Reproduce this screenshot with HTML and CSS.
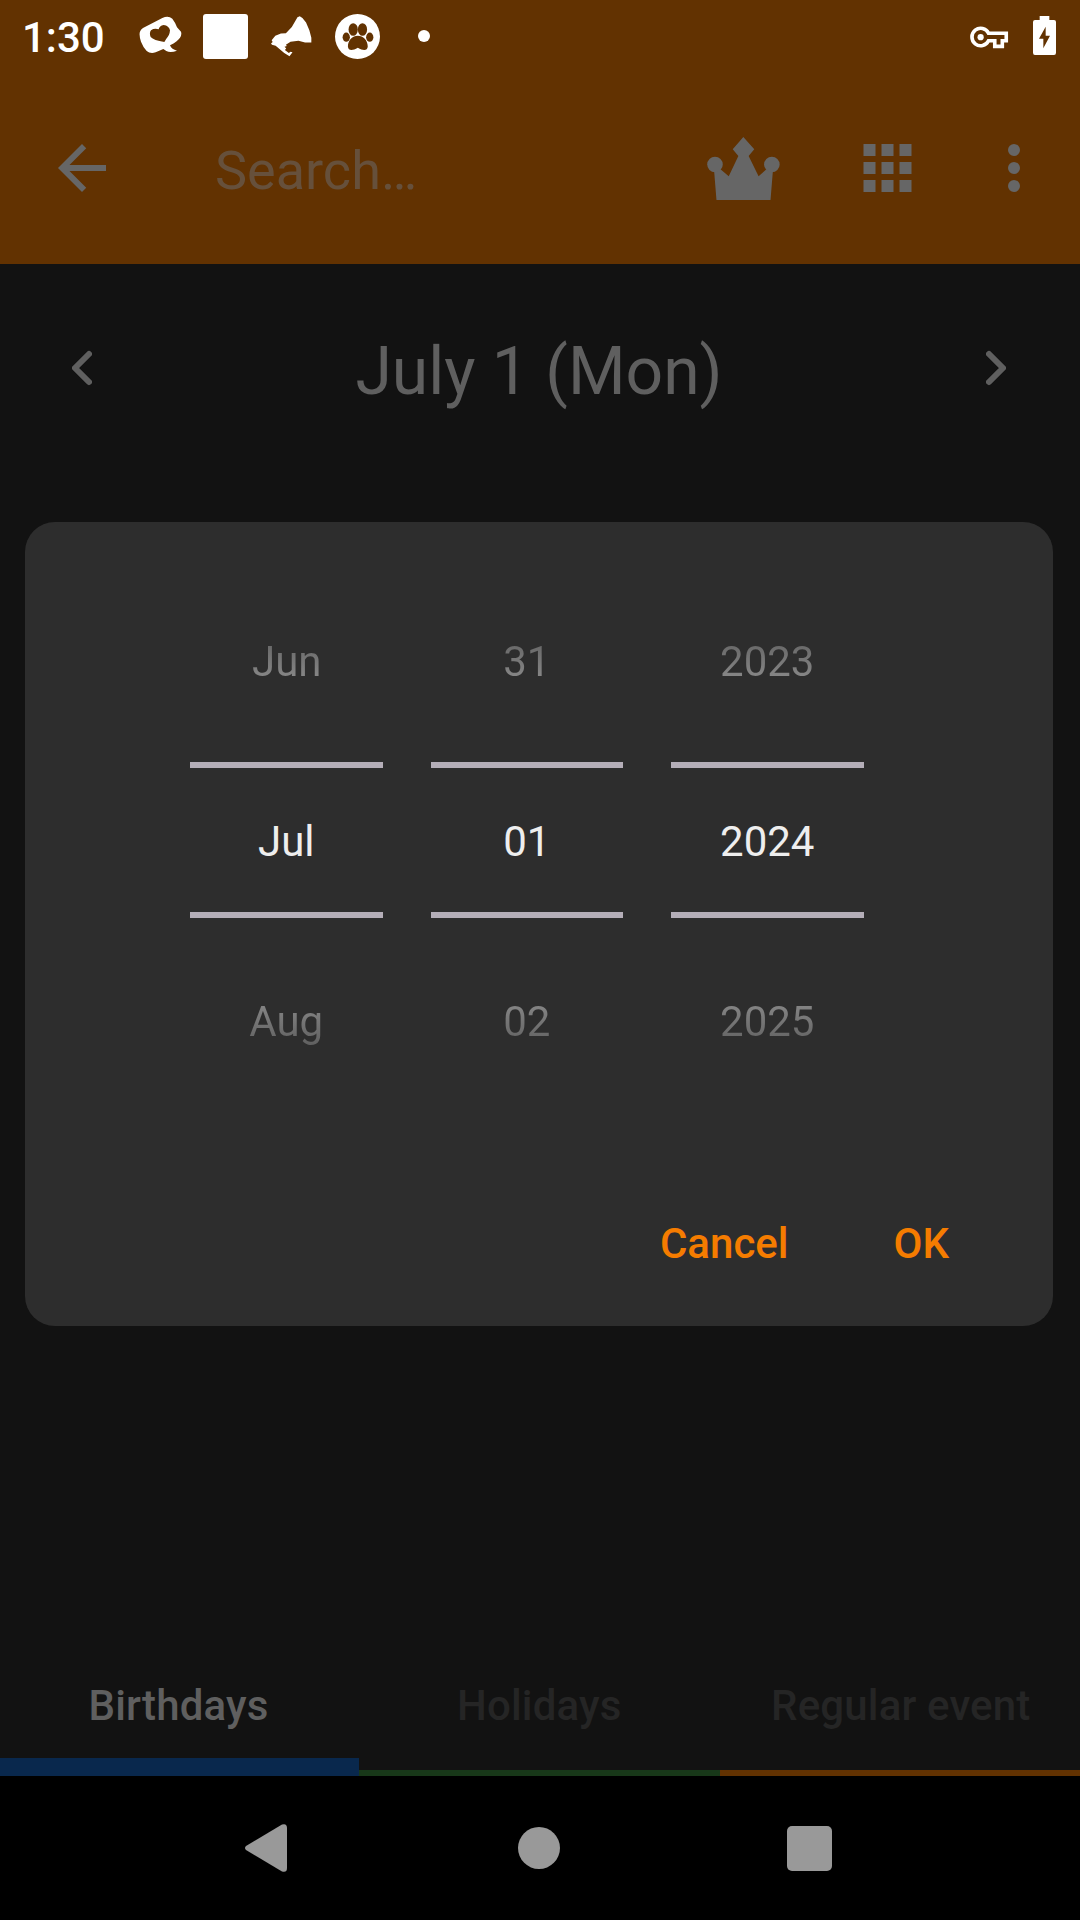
FILE: index.html
```html
<!DOCTYPE html>
<html lang="en">
<head>
<meta charset="utf-8">
<title>Calendar</title>
<link rel="stylesheet" href="styles.css">
</head>
<body>
<div class="screen">
  <header class="header">
    <div class="status">
      <span class="clock">1:30</span>
      <div class="notifications">
        <svg class="n-chat" viewBox="414 48 132 114"><path fill="#fff" fill-rule="evenodd" d="M416 106Q414 92 426 84L484 54Q502 46 514 56Q522 66 528 82L540 95Q543 104 537 113Q530 124 507 136Q512 149 528 152Q508 160 496 153L487 147L464 157Q448 162 437 153Q427 143 420 125Q416 115 416 106ZM490 126Q458 121 449 111Q444 99 450 91Q460 84 473 88Q475 77 488 75Q504 77 507 91Q506 106 496 116Z"/></svg>
        <span class="n-square"></span>
        <svg class="n-horn" viewBox="94 46 124 124"><path fill="#fff" d="M174 50L181 47L189 52L200 66L210 89L216 112L216 126L197 126L177 121L153 124L139 133L142 137L135 139L140 144L136 149L148 158L153 154L159 156L150 168L134 158L108 136L97 133L94 129L99 125L96 119L107 106L124 99L139 98L157 79Z"/></svg>
        <svg class="n-paw" viewBox="284 39 136 136"><circle cx="352" cy="107" r="68" fill="#fff"/><g fill="#623201"><ellipse cx="339" cy="86" rx="14" ry="19"/><ellipse cx="367" cy="86" rx="14" ry="19"/><ellipse cx="318" cy="109" rx="11" ry="14"/><ellipse cx="389" cy="109" rx="11" ry="14"/><path d="M353 105C369 105 383 119 383 137C382 150 370 151 353 141C336 151 324 150 323 137C323 119 337 105 353 105Z"/></g></svg>
        <span class="n-more"></span>
      </div>
      <div class="system">
        <svg class="s-key" viewBox="90 76 118 70"><path fill="none" stroke="#fff" stroke-width="11" d="M146 98H200V121H188V138H165V121H146A26.500 26.500 0 1 1 146 98Z"/><circle cx="122" cy="110" r="9.500" fill="#fff"/></svg>
        <svg class="s-battery" viewBox="279 48 69 117"><path fill="#fff" fill-rule="evenodd" d="M299 48H328V60H342Q348 60 348 66V158Q348 165 342 165H285Q279 165 279 158V66Q279 60 285 60H299ZM317 80L297 116H310V145L330 107H317Z"/></svg>
      </div>
    </div>
    <div class="toolbar">
      <svg class="back" viewBox="0 0 24 24"><path fill="#666" d="M20 11H7.830l5.590-5.590L12 4l-8 8 8 8 1.410-1.410L7.830 13H20v-2z"/></svg>
      <span class="search">Search…</span>
      <svg class="crown" viewBox="81 80 219 190"><g fill="#666"><path d="M190 80L223 117L206 137L236 198L258 179L279 184L272 270H109L102 184L122 178L146 198L175 137L158 117Z"/><circle cx="104.500" cy="163" r="23.500"/><circle cx="276" cy="163" r="23.500"/></g></svg>
      <svg class="apps" viewBox="0 0 48 48"><path fill="#666" d="M0 0h12v12H0zM18 0h12v12H18zM36 0h12v12H36zM0 18h12v12H0zM18 18h12v12H18zM36 18h12v12H36zM0 36h12v12H0zM18 36h12v12H18zM36 36h12v12H36z"/></svg>
      <svg class="more" viewBox="0 0 12 48"><g fill="#666"><circle cx="6" cy="6" r="6"/><circle cx="6" cy="24" r="6"/><circle cx="6" cy="42" r="6"/></g></svg>
    </div>
  </header>

  <main class="content">
    <div class="day">
      <svg class="chevron" viewBox="0 0 20 36"><path d="M17 4L3 18L17 32"/></svg>
      <h1 class="date">July 1 (Mon)</h1>
      <svg class="chevron" viewBox="0 0 20 36"><path d="M3 4L17 18L3 32"/></svg>
    </div>
  </main>

  <nav class="tabs">
    <div class="tab tab-birthdays">Birthdays</div>
    <div class="tab tab-holidays">Holidays</div>
    <div class="tab tab-regular">Regular event</div>
  </nav>

  <footer class="navbar">
    <svg class="nav-back" viewBox="0 0 42 48"><path fill="#999" d="M1 22L37 .5Q42 -1 42 4V44Q42 49 37 47.500L1 26Q-1 24 1 22Z"/></svg>
    <span class="nav-home"></span>
    <span class="nav-recent"></span>
  </footer>

  <section class="dialog">
    <div class="pickers">
      <div class="picker"><span class="before">Jun</span><span class="current">Jul</span><span class="after">Aug</span></div>
      <div class="picker"><span class="before">31</span><span class="current">01</span><span class="after">02</span></div>
      <div class="picker"><span class="before">2023</span><span class="current">2024</span><span class="after">2025</span></div>
    </div>
    <div class="actions"><span>Cancel</span><span>OK</span></div>
  </section>
</div>
</body>
</html>
```
FILE: styles.css
```css
* { box-sizing: border-box; }

body {
  margin: 0;
  background: #121212;
  font-family: Roboto, sans-serif;
}

svg { display: block; flex: none; }

.screen {
  position: relative;
  display: flex;
  flex-direction: column;
  width: 1080px;
  height: 1920px;
  overflow: hidden;
  background: #121212;
}

.header {
  height: 264px;
  background: #623201;
}

/* Status bar */
.status {
  display: flex;
  align-items: center;
  height: 72px;
  padding: 0 24px 0 22px;
}

.clock {
  width: 117px;
  padding-top: 3px;
  font-size: 42px;
  font-weight: 500;
  line-height: 50px;
  color: #fff;
}

.notifications { display: flex; align-items: center; }
.n-chat { width: 44px; height: 38px; margin-top: -2px; }
.n-square { width: 45px; height: 45px; margin-left: 20px; border-radius: 3px; background: #fff; }
.n-horn { width: 41px; height: 41px; margin-left: 23px; }
.n-paw { width: 45px; height: 45px; margin-left: 23px; }
.n-more { width: 12px; height: 12px; margin-left: 38px; border-radius: 50%; background: #fff; }

.system { display: flex; align-items: center; gap: 24px; margin-left: auto; }
.s-key { width: 39px; height: 23px; margin-top: 2px; }
.s-battery { width: 23px; height: 39px; margin-top: -1px; }

/* Toolbar */
.toolbar {
  display: flex;
  align-items: center;
  height: 192px;
  padding: 0 60px 0 46px;
}

.back { width: 72px; height: 72px; }

.search {
  flex: 1;
  margin: 5px 0 0 97px;
  font-size: 54px;
  line-height: 64px;
  color: #66503b;
}

.crown { width: 73px; height: 63px; margin-right: 83px; }
.apps { width: 49px; height: 48px; margin-right: 96px; }
.more { width: 12px; height: 48px; }

/* Selected day */
.content { flex: 1; }

.day {
  display: flex;
  align-items: center;
  justify-content: space-between;
  height: 208px;
  padding: 0 74px 0 72px;
}

.chevron {
  width: 20px;
  height: 36px;
  fill: none;
  stroke: #5f5f5f;
  stroke-width: 6;
  stroke-linecap: round;
  stroke-linejoin: round;
}

.date {
  margin: 8px 0 0;
  font-size: 66px;
  font-weight: 400;
  line-height: 80px;
  color: #5f5f5f;
}

/* Event tabs */
.tabs {
  display: grid;
  grid-template-columns: 359px 360.500px 360.500px;
  height: 140px;
}

.tab {
  padding-top: 45px;
  border-bottom: 6px solid;
  font-size: 42px;
  font-weight: 500;
  line-height: 50px;
  letter-spacing: 0.150px;
  text-align: center;
  color: #252525;
}

.tab-birthdays {
  padding-right: 2px;
  border-bottom: 18px solid #09284d;
  color: #5f5f5f;
}

.tab-holidays { border-bottom-color: #183819; }
.tab-regular { padding-left: 2px; border-bottom-color: #623201; }

/* System navigation */
.navbar {
  display: flex;
  align-items: center;
  height: 144px;
  padding-left: 245px;
  background: #000;
}

.nav-back { width: 42px; height: 48px; }
.nav-home { width: 42px; height: 42px; margin-left: 231px; border-radius: 50%; background: #999; }
.nav-recent { width: 45px; height: 45px; margin-left: 227px; border-radius: 5px; background: #999; }

/* Date picker dialog */
.dialog {
  position: absolute;
  top: 522px;
  left: 25px;
  width: 1028px;
  height: 804px;
  padding: 60px 0 0;
  border-radius: 30px;
  background: #2d2d2d;
}

.pickers {
  display: flex;
  gap: 48px;
  margin-left: 165px;
}

.picker {
  display: flex;
  flex-direction: column;
  width: 192.500px;
  font-size: 42px;
  text-align: center;
}

.before, .after {
  height: 180px;
  line-height: 160px;
  color: transparent;
  -webkit-background-clip: text;
  background-clip: text;
}

.before { background-image: linear-gradient(#303030, #d3d3d3); }
.after { padding-top: 24px; background-image: linear-gradient(#d3d3d3, #303030); }
.picker:first-child .before { padding-left: 1px; }

.current {
  height: 156px;
  border-top: 6px solid #b4aeb8;
  border-bottom: 6px solid #b4aeb8;
  line-height: 147px;
  color: #eee;
}

.actions {
  display: flex;
  justify-content: flex-end;
  gap: 105px;
  margin-top: 121px;
  padding-right: 104px;
  font-size: 42px;
  font-weight: 500;
  line-height: 50px;
  color: #f57c00;
}
```
